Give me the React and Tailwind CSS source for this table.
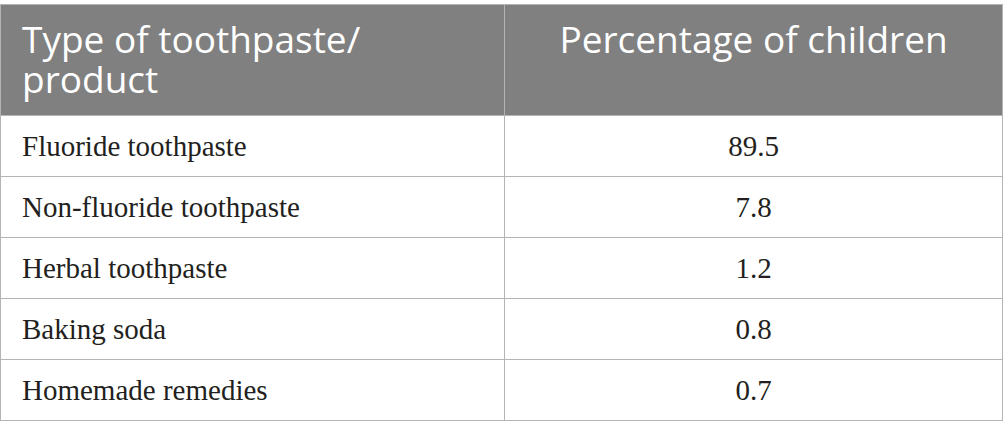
const rows = [
  ['Fluoride toothpaste', '89.5'],
  ['Non-fluoride toothpaste', '7.8'],
  ['Herbal toothpaste', '1.2'],
  ['Baking soda', '0.8'],
  ['Homemade remedies', '0.7'],
]

export default function App() {
  return (
    <div className="w-[1005px] h-[440px] bg-white pt-[4px]">
      <table className="w-[1003px] border-collapse table-fixed">
        <colgroup>
          <col className="w-[504px]" />
          <col />
        </colgroup>
        <thead>
          <tr className="h-[111px] bg-[#808080] text-white font-['Open_Sans',sans-serif] text-[37px] leading-[40px]">
            <th className="border border-[#b4b4b4] pl-[21px] pr-4 pt-[14px] text-left align-top font-normal">
              Type of toothpaste/
              <br />
              product
            </th>
            <th className="border border-[#b4b4b4] pt-[14px] text-center align-top font-normal">
              Percentage of children
            </th>
          </tr>
        </thead>
        <tbody className="font-['Liberation_Serif',serif] text-[29px] text-[#231f20]">
          {rows.map(([name, pct]) => (
            <tr key={name} className="h-[61px]">
              <td className="border border-[#b4b4b4] pl-[21px] pt-[2px]">{name}</td>
              <td className="border border-[#b4b4b4] pt-[2px] text-center">{pct}</td>
            </tr>
          ))}
        </tbody>
      </table>
    </div>
  )
}
